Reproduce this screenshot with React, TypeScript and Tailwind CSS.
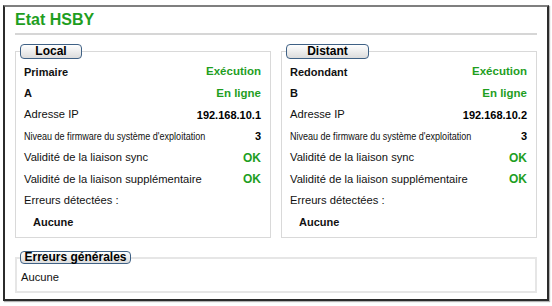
const green = "text-[#1f9e1f]";

type Row = { label: string; value?: string; kind: "bold" | "normal" | "narrow" | "indent"; valueGreen?: boolean; valueSize?: string };

function Legend({ label, width }: { label: string; width: string }) {
  return (
    <legend className="ml-[4px] p-0">
      <div
        className={`${width} h-[15px] rounded-[4px] border border-[#3f6185] bg-gradient-to-b from-white to-[#dcdcdc] text-center text-[12px] font-bold leading-[13px] text-black`}
      >
        {label}
      </div>
    </legend>
  );
}

function Panel({ title, legendWidth, rows }: { title: string; legendWidth: string; rows: Row[] }) {
  return (
    <fieldset className="h-[194px] w-[256px] border border-[#d9d9d9] px-0 pt-[2px]">
      <Legend label={title} width={legendWidth} />
      <div className="flex flex-col px-[7px]">
        {rows.map((r) => (
          <div key={r.label} className="flex h-[21.5px] items-center justify-between pl-[1px] pr-[2px]">
            {r.kind === "narrow" ? (
              <span className="inline-block origin-left scale-x-[0.82] whitespace-nowrap text-[11px]">{r.label}</span>
            ) : (
              <span
                className={
                  r.kind === "bold"
                    ? "text-[11px] font-bold"
                    : r.kind === "indent"
                      ? "pl-[9px] text-[11px] font-bold"
                      : "text-[11.2px]"
                }
              >
                {r.label}
              </span>
            )}
            {r.value && (
              <span className={`font-bold ${r.valueSize ?? "text-[11px]"} ${r.valueGreen ? green : "text-black"}`}>
                {r.value}
              </span>
            )}
          </div>
        ))}
      </div>
    </fieldset>
  );
}

function rowsFor(role: string, letter: string, ip: string): Row[] {
  return [
    { label: role, value: "Exécution", kind: "bold", valueGreen: true, valueSize: "text-[11.5px]" },
    { label: letter, value: "En ligne", kind: "bold", valueGreen: true, valueSize: "text-[11.5px]" },
    { label: "Adresse IP", value: ip, kind: "normal" },
    { label: "Niveau de firmware du système d'exploitation", value: "3", kind: "narrow" },
    { label: "Validité de la liaison sync", value: "OK", kind: "normal", valueGreen: true, valueSize: "text-[12px]" },
    { label: "Validité de la liaison supplémentaire", value: "OK", kind: "normal", valueGreen: true, valueSize: "text-[12px]" },
    { label: "Erreurs détectées :", kind: "normal" },
    { label: "Aucune", kind: "indent" },
  ];
}

export default function App() {
  return (
    <div className="h-[306px] w-[552px] bg-white pl-[3px] pt-[5px] text-[#111] [font-family:'Liberation_Sans',Arial,sans-serif]">
      <div className="h-[296px] w-[546px] border-2 border-[#2b2b2b] border-t-[#7f7f7f] px-[10px] shadow-[1px_1px_1px_rgba(0,0,0,0.3)]">
        <div className="border-b-2 border-[#d6d6d6] pb-[3px] pt-[3px]">
          <h1 className={`text-[16px] leading-[20px] font-bold ${green}`}>Etat HSBY</h1>
        </div>

        <div className="mt-[9px] flex gap-[10px]">
          <Panel title="Local" legendWidth="w-[62px]" rows={rowsFor("Primaire", "A", "192.168.10.1")} />
          <Panel title="Distant" legendWidth="w-[83px]" rows={rowsFor("Redondant", "B", "192.168.10.2")} />
        </div>

        <fieldset className="mt-[13px] h-[42px] w-[522px] border-2 border-[#e6e6e6] px-0">
          <legend className="ml-[3px] p-0">
            <div className="h-[13px] w-[111px] rounded-[4px] border border-[#3f6185] bg-gradient-to-b from-white to-[#dcdcdc] text-center text-[12px] font-bold leading-[11px] text-black">
              Erreurs générales
            </div>
          </legend>
          <div className="px-[4px] pt-[5px] text-[11.2px]">Aucune</div>
        </fieldset>
      </div>
    </div>
  );
}
